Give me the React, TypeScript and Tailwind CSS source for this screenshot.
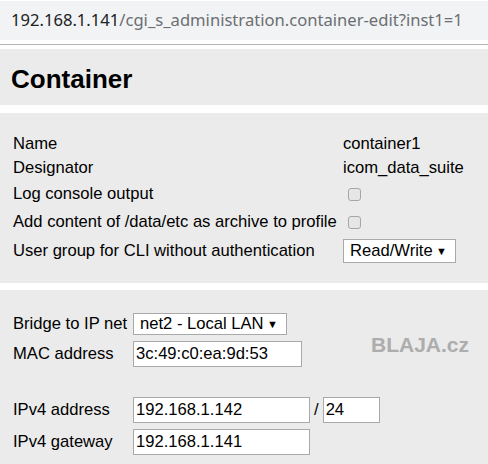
import React from "react";

function Checkbox() {
  return (
    <div className="ml-[5px] w-[13px] h-[13px] rounded-[3px] border border-[#a6a6a6] bg-[#e6e6e6]" />
  );
}

function Select({ label, w, h }: { label: string; w: string; h: string }) {
  return (
    <div
      className={`${w} ${h} bg-white border border-[#a9a9a9] flex items-center justify-between pl-[6px] pr-[8px]`}
    >
      <span>{label}</span>
      <span className="text-[11px] leading-none">▼</span>
    </div>
  );
}

function Input({ value, w }: { value: string; w: string }) {
  return (
    <div className={`${w} h-[26px] bg-white border border-[#a9a9a9] flex items-center pl-[2px]`}>
      {value}
    </div>
  );
}

export default function App() {
  return (
    <div className="w-[488px] h-[464px] bg-white overflow-hidden relative flex flex-col font-['Liberation_Sans',Arial,sans-serif] text-[16.6px] text-black">
      <div className="mt-px h-[39px] shrink-0 bg-[#f1f3f4] flex items-center pl-[11px] font-['Noto_Sans',sans-serif] text-[16.6px]">
        <span className="text-[#202124]">192.168.1.141</span>
        <span className="text-[#6b6e72]">/cgi_s_administration.container-edit?inst1=1</span>
      </div>
      <div className="mt-[4px] h-px shrink-0 bg-[#b4b4b4]" />
      <div className="mt-[4px] h-[56px] shrink-0 bg-[#ebebeb] flex items-center pl-[11px] pt-[3px]">
        <h1 className="text-[26px] font-bold leading-none">Container</h1>
      </div>

      <div className="mt-[8px] h-[170px] shrink-0 bg-[#ebebeb] pt-[19px] pl-[13px]">
        <div className="flex h-[24px] items-center">
          <div className="w-[330px]">Name</div>
          <div>container1</div>
        </div>
        <div className="flex h-[24px] items-center">
          <div className="w-[330px]">Designator</div>
          <div>icom_data_suite</div>
        </div>
        <div className="flex h-[28px] items-center">
          <div className="w-[330px]">Log console output</div>
          <Checkbox />
        </div>
        <div className="flex h-[28px] items-center">
          <div className="w-[330px] whitespace-nowrap">Add content of /data/etc as archive to profile</div>
          <Checkbox />
        </div>
        <div className="flex h-[30px] items-center">
          <div className="w-[330px]">User group for CLI without authentication</div>
          <Select label="Read/Write" w="w-[113px]" h="h-[24px]" />
        </div>
      </div>

      <div className="mt-[7px] flex-1 bg-[#ebebeb] pt-[22px] pl-[13px]">
        <div className="flex h-[24px] items-center">
          <div className="w-[120px]">Bridge to IP net</div>
          <Select label="net2 - Local LAN" w="w-[154px]" h="h-[22px]" />
        </div>
        <div className="flex h-[36px] items-center">
          <div className="w-[120px]">MAC address</div>
          <Input value="3c:49:c0:ea:9d:53" w="w-[169px]" />
        </div>
        <div className="flex h-[26px] items-center mt-[25px]">
          <div className="w-[120px]">IPv4 address</div>
          <Input value="192.168.1.142" w="w-[177px]" />
          <span className="mx-[4px]">/</span>
          <Input value="24" w="w-[57px]" />
        </div>
        <div className="flex h-[26px] items-center mt-[6px]">
          <div className="w-[120px]">IPv4 gateway</div>
          <Input value="192.168.1.141" w="w-[177px]" />
        </div>
      </div>

      <div className="absolute left-[371px] top-[333px] text-[21px] font-bold text-[#adadad] leading-[23px]">
        BLAJA.cz
      </div>
    </div>
  );
}
